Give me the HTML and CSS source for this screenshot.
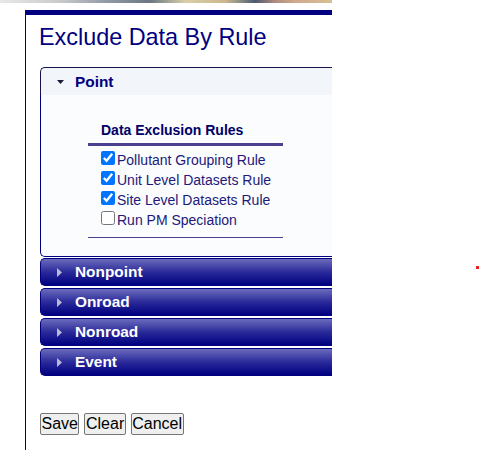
FILE: index.html
```html
<!DOCTYPE html>
<html lang="en">
<head>
    <meta charset="UTF-8">
    <title>Exclude Data By Rule</title>
    <link rel="stylesheet" href="styles.css">
</head>
<body>
<div class="strip"></div>
<div class="page">
    <div class="content">
        <h1 class="title">Exclude Data By Rule</h1>
        <div class="accordion">
            <div class="acc-head open">
                <span class="icon"><svg width="7" height="4" viewBox="0 0 7 4"><polygon points="0,0 7,0 3.5,4" fill="#1a1a3a"/></svg></span>Point
            </div>
            <div class="acc-panel">
                <table class="rules">
                    <thead>
                    <tr><th>Data Exclusion Rules</th></tr>
                    </thead>
                    <tbody>
                    <tr>
                        <td>
                            <label class="rule"><input type="checkbox" checked>Pollutant Grouping Rule</label>
                            <label class="rule"><input type="checkbox" checked>Unit Level Datasets Rule</label>
                            <label class="rule"><input type="checkbox" checked>Site Level Datasets Rule</label>
                            <label class="rule"><input type="checkbox">Run PM Speciation</label>
                        </td>
                    </tr>
                    </tbody>
                </table>
            </div>
            <div class="acc-head">
                <span class="icon"><svg width="5" height="9" viewBox="0 0 5 9"><polygon points="0,0 5,4.5 0,9" fill="#b9b9d6"/></svg></span>Nonpoint
            </div>
            <div class="acc-head">
                <span class="icon"><svg width="5" height="9" viewBox="0 0 5 9"><polygon points="0,0 5,4.5 0,9" fill="#b9b9d6"/></svg></span>Onroad
            </div>
            <div class="acc-head">
                <span class="icon"><svg width="5" height="9" viewBox="0 0 5 9"><polygon points="0,0 5,4.5 0,9" fill="#b9b9d6"/></svg></span>Nonroad
            </div>
            <div class="acc-head">
                <span class="icon"><svg width="5" height="9" viewBox="0 0 5 9"><polygon points="0,0 5,4.5 0,9" fill="#b9b9d6"/></svg></span>Event
            </div>
        </div>
        <div class="buttons">
            <button>Save</button>
            <button>Clear</button>
            <button>Cancel</button>
        </div>
    </div>
</div>
<span class="dot"></span>
</body>
</html>
```

FILE: styles.css
```css
body{margin: 0;padding: 0;font-family: "Liberation Sans", Arial, sans-serif;overflow: hidden}
.strip{
    width: 332px;
    height: 3px;
    background: linear-gradient(to right, #e8e8e6 0, #c9cacb 60px, #8e97a3 110px, #6c7684 150px, #d8cfa8 185px, #cdb78e 225px, #8a8f86 240px, #4d5a70 255px, #b08a80 275px, #cfa98c 295px, #d6c096 332px);
}
.page{
    margin: 7px 0 0 25px;
    width: 306px;
    height: 435px;
    border-top: 5px solid #000080;
    border-left: 1px solid #000080;
    overflow: hidden;
}
.content{
    width: 420px;
    padding-left: 14px;
}
.title{
    margin: 9px 0 0 -1px;
    font-size: 23.4px;
    line-height: 26px;
    font-weight: normal;
    color: #000080;
}
.accordion{margin-top: 17px}
.acc-head{
    display: flex;
    align-items: center;
    height: 26px;
    margin-top: 2px;
    padding-left: 16px;
    border: 1px solid #000080;
    border-right: 0;
    border-radius: 5px 0 0 5px;
    background: linear-gradient(#6b6bbd, #2a2a9a 50%, #000080);
    color: #fff;
    font-size: 15.4px;
    font-weight: bold;
}
.acc-head.open{
    height: 27px;
    margin-top: 0;
    border-color: #14144a;
    border-bottom: 0;
    border-radius: 5px 0 0 0;
    background: #f2f5f9;
    color: #000080;
}
.icon{
    display: flex;
    align-items: center;
    width: 7px;
    margin-right: 11px;
}
.acc-panel{
    padding: 22px 0 18px 47px;
    border: 1px solid #000080;
    border-top: 0;
    border-right: 0;
    border-radius: 0 0 0 5px;
    background: #fafcfe;
}
.acc-panel + .acc-head{margin-top: 1px}
.rules{
    width: 195px;
    border-spacing: 0;
}
.rules th{
    padding: 4px 0 4px 13px;
    border-bottom: 3px solid #4b3f8f;
    text-align: left;
    font-size: 14px;
    line-height: 18px;
    color: #000066;
}
.rules td{
    padding: 4px 0 7px 13px;
    border-bottom: 1px solid #4b3f8f;
}
.rule{
    display: block;
    height: 20px;
    line-height: 20px;
    font-size: 14px;
    color: #22197a;
    white-space: nowrap;
}
.rule input{
    width: 14px;
    height: 14px;
    margin: 0 2px 0 0;
    vertical-align: baseline;
}
.buttons{
    display: flex;
    gap: 5px;
    margin-top: 37px;
}
.buttons button{
    height: 22px;
    padding: 0 0.5px;
    border: 1px solid #767676;
    border-radius: 2px;
    background: #efefef;
    font-family: "Liberation Sans", Arial, sans-serif;
    font-size: 16px;
    color: #000;
}
.dot{
    position: absolute;
    left: 476px;
    top: 266px;
    width: 3px;
    height: 3px;
    background: #e42222;
}
```
